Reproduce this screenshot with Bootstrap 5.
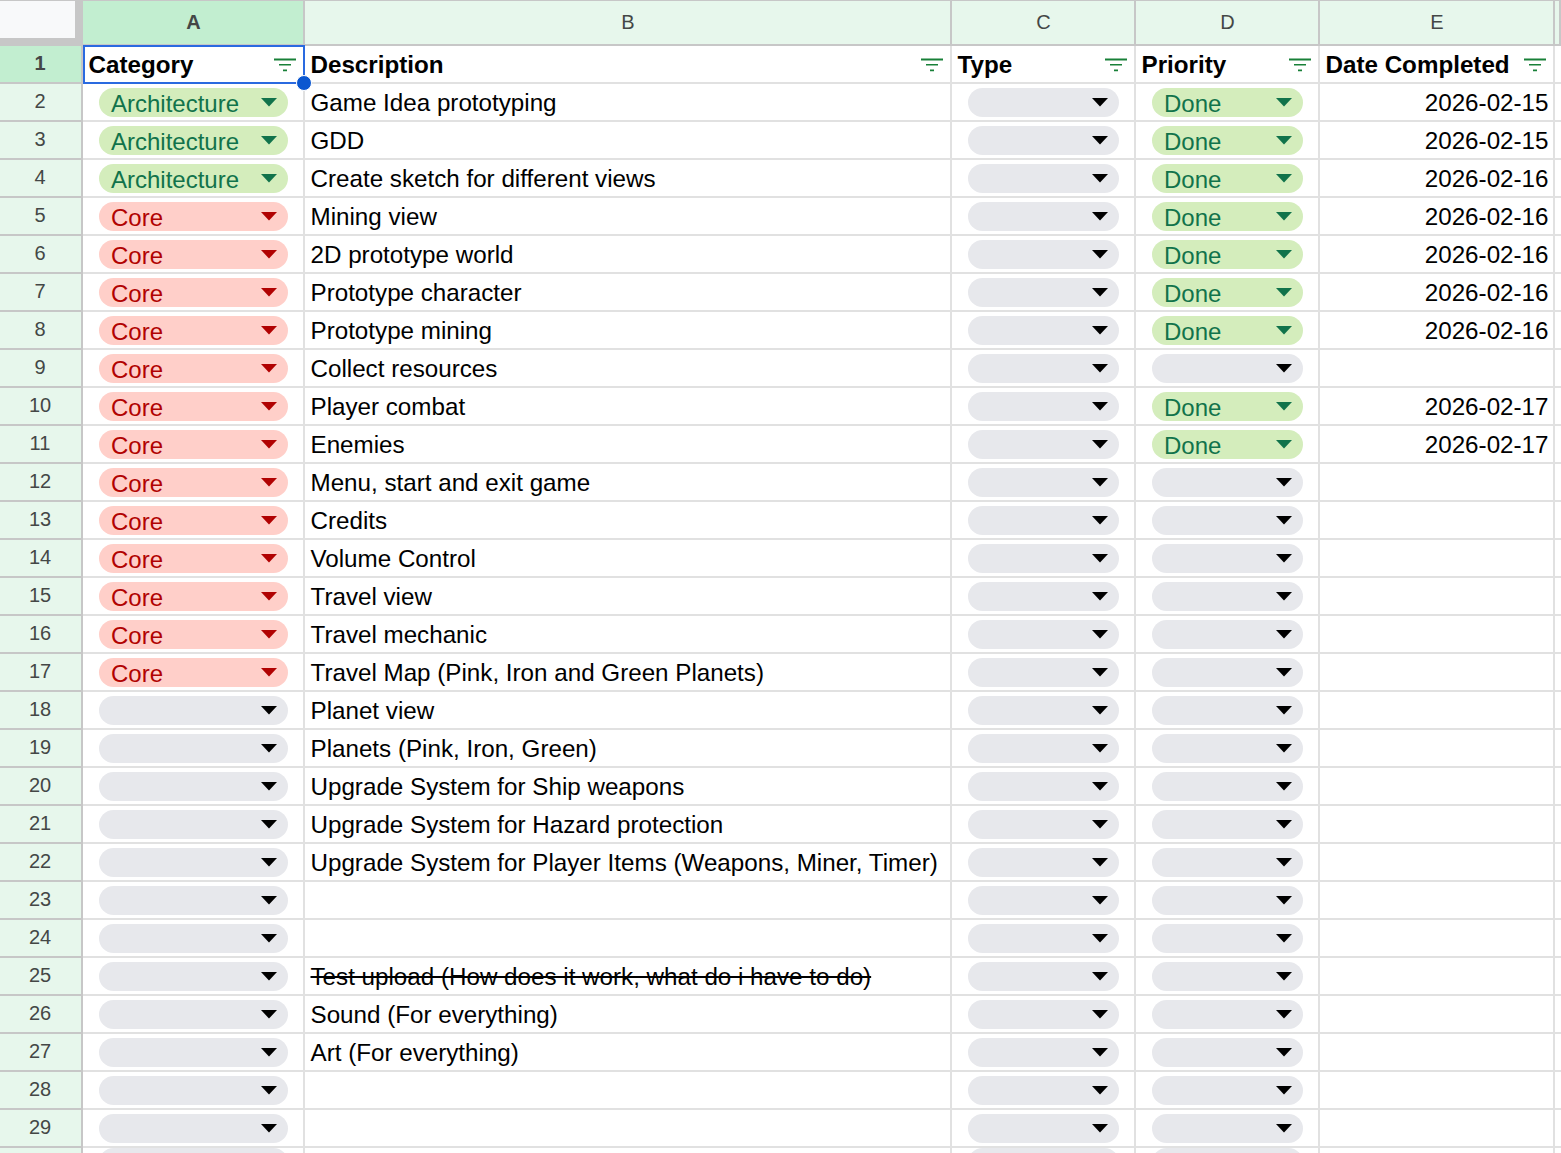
<!DOCTYPE html>
<html lang="en">
<head>
    <meta charset="UTF-8">
    <meta name="viewport" content="width=device-width, initial-scale=1">
    <title>Task sheet</title>
    <link href="https://cdn.jsdelivr.net/npm/bootstrap@5.3.0/dist/css/bootstrap.min.css" rel="stylesheet">
    <script src="https://cdn.jsdelivr.net/npm/bootstrap@5.3.0/dist/js/bootstrap.bundle.min.js"></script>
<style>
    html, body {
        margin: 0;
        height: 100%;
        overflow: hidden;
        background: #fff;
        font-family: "Liberation Sans", Arial, sans-serif;
        color: #000;
    }

    .sheet {
        display: grid;
        grid-template-columns: 83px 222px 647px 184px 184px 235px 6px;
        grid-template-rows: 46px repeat(29, 38px);
        width: 1561px;
        height: 1153px;
        overflow: hidden;
        position: relative;
    }

    /* top row with the column letters */
    .col-head {
        background: #e7f7ec;
        border-top: 1px solid #c7c7c7;
        border-right: 2px solid #c7c7c7;
        border-bottom: 2px solid #c7c7c7;
        color: #444746;
        font-size: 20px;
        line-height: 1;
        padding: 0 0 2px 1px;
    }
    .col-head.picked {
        background: #c2eed0;
        font-weight: 700;
    }
    .corner {
        background: #c7c7c7;
        border-top: 1px solid #c7c7c7;
    }
    .corner-in {
        width: 75px;
        height: 37px;
        background: #f8f9fa;
    }

    /* left column with the row numbers */
    .row-head {
        background: #e7f7ec;
        border-right: 2px solid #c7c7c7;
        border-bottom: 2px solid #c7c7c7;
        color: #444746;
        font-size: 20px;
        padding: 0 1px 3px 0;
    }
    .row-head.picked {
        background: #c2eed0;
        font-weight: 700;
    }

    .cell {
        border-right: 2px solid #e1e1e1;
        border-bottom: 2px solid #e1e1e1;
        font-size: 24.2px;
        line-height: 1;
        padding: 2px 6px 0 5.5px;
        white-space: nowrap;
        overflow: visible;
    }
    .cell.head-cell {
        font-weight: 700;
    }
    .cell.date-cell {
        padding-right: 4.5px;
    }
    .cell.struck {
        text-decoration: line-through;
    }
    .cell.pill-cell {
        padding: 0 15px 0 16px;
    }

    .pill {
        height: 29px;
        width: 100%;
        padding: 3px 11px 0 12px;
        font-size: 24px;
        border-radius: 15px;
    }
    .pill-blank { background: #e7e8ec; color: #000; }
    .pill-green { background: #d4edbc; color: #11734b; }
    .pill-red { background: #ffcfc9; color: #b10202; }
    .pill svg { margin-bottom: 4px; }

    /* blue box round the selected cell A1 */
    .pick-box {
        position: absolute;
        left: 83px;
        top: 45px;
        width: 222px;
        height: 39px;
        border: 2px solid #2a6ae0;
        pointer-events: none;
    }
    .pick-dot {
        position: absolute;
        left: 296px;
        top: 75px;
        width: 16px;
        height: 16px;
        border-radius: 50%;
        background: #0b57d0;
        border: 1px solid #fff;
    }
</style>
</head>
<body>
    <div class="sheet" id="sheet"></div>

    <script>
        const A = "Architecture", C = "Core", D = "Done";
        // category, description, priority, date
        const rows = [
            [A, "Game Idea prototyping", D, "2026-02-15"],
            [A, "GDD", D, "2026-02-15"],
            [A, "Create sketch for different views", D, "2026-02-16"],
            [C, "Mining view", D, "2026-02-16"],
            [C, "2D prototype world", D, "2026-02-16"],
            [C, "Prototype character", D, "2026-02-16"],
            [C, "Prototype mining", D, "2026-02-16"],
            [C, "Collect resources", "", ""],
            [C, "Player combat", D, "2026-02-17"],
            [C, "Enemies", D, "2026-02-17"],
            [C, "Menu, start and exit game", "", ""],
            [C, "Credits", "", ""],
            [C, "Volume Control", "", ""],
            [C, "Travel view", "", ""],
            [C, "Travel mechanic", "", ""],
            [C, "Travel Map (Pink, Iron and Green Planets)", "", ""],
            ["", "Planet view", "", ""],
            ["", "Planets (Pink, Iron, Green)", "", ""],
            ["", "Upgrade System for Ship weapons", "", ""],
            ["", "Upgrade System for Hazard protection", "", ""],
            ["", "Upgrade System for Player Items (Weapons, Miner, Timer)", "", ""],
            ["", "", "", ""],
            ["", "", "", ""],
            ["", "Test upload (How does it work, what do i have to do)", "", ""],
            ["", "Sound (For everything)", "", ""],
            ["", "Art (For everything)", "", ""],
            ["", "", "", ""],
            ["", "", "", ""]
        ];

        const filterIcon = `<svg width="24" height="16" viewBox="0 0 24 16" class="flex-shrink-0"><path fill="#188038" d="M1 1.5h22v2H1zM6 7h12v1.6H6zM10 12.5h4v1.8h-4z"/></svg>`;

        function arrow(color) {
            return `<svg width="16" height="10" viewBox="0 0 16 10" class="flex-shrink-0"><path fill="${color}" d="M0 1h16L8 9.5z"/></svg>`;
        }

        function pill(value) {
            const kind = value === C ? "pill-red" : value ? "pill-green" : "pill-blank";
            const color = value === C ? "#b10202" : value ? "#11734b" : "#000";
            return `<div class="pill ${kind} d-flex align-items-center justify-content-between"><span>${value}</span>${arrow(color)}</div>`;
        }

        function render() {
            let html = `<div class="corner"><div class="corner-in"></div></div>`;
            ["A", "B", "C", "D", "E", ""].forEach((letter, i) => {
                html += `<div class="col-head d-flex align-items-center justify-content-center ${i === 0 ? "picked" : ""}">${letter}</div>`;
            });

            html += `<div class="row-head picked d-flex align-items-center justify-content-center">1</div>`;
            ["Category", "Description", "Type", "Priority", "Date Completed"].forEach(name => {
                html += `<div class="cell head-cell d-flex align-items-center justify-content-between"><span>${name}</span>${filterIcon}</div>`;
            });
            html += `<div class="cell"></div>`;

            rows.forEach((r, i) => {
                html += `<div class="row-head d-flex align-items-center justify-content-center">${i + 2}</div>`;
                html += `<div class="cell pill-cell d-flex align-items-center">${pill(r[0])}</div>`;
                html += `<div class="cell d-flex align-items-center ${i === 23 ? "struck" : ""}"><span>${r[1]}</span></div>`;
                html += `<div class="cell pill-cell d-flex align-items-center">${pill("")}</div>`;
                html += `<div class="cell pill-cell d-flex align-items-center">${pill(r[2])}</div>`;
                html += `<div class="cell date-cell d-flex align-items-center justify-content-end">${r[3]}</div>`;
                html += `<div class="cell"></div>`;
            });

            // row 30 only peeks in at the bottom edge, its number is below the fold
            html += `<div class="row-head"></div>`;
            html += `<div class="cell pill-cell d-flex align-items-center">${pill("")}</div><div class="cell"></div>`;
            html += `<div class="cell pill-cell d-flex align-items-center">${pill("")}</div><div class="cell pill-cell d-flex align-items-center">${pill("")}</div>`;
            html += `<div class="cell"></div><div class="cell"></div>`;

            html += `<div class="pick-box"></div><div class="pick-dot"></div>`;
            document.getElementById("sheet").innerHTML = html;
        }

        document.addEventListener("DOMContentLoaded", render);
    </script>
</body>
</html>
